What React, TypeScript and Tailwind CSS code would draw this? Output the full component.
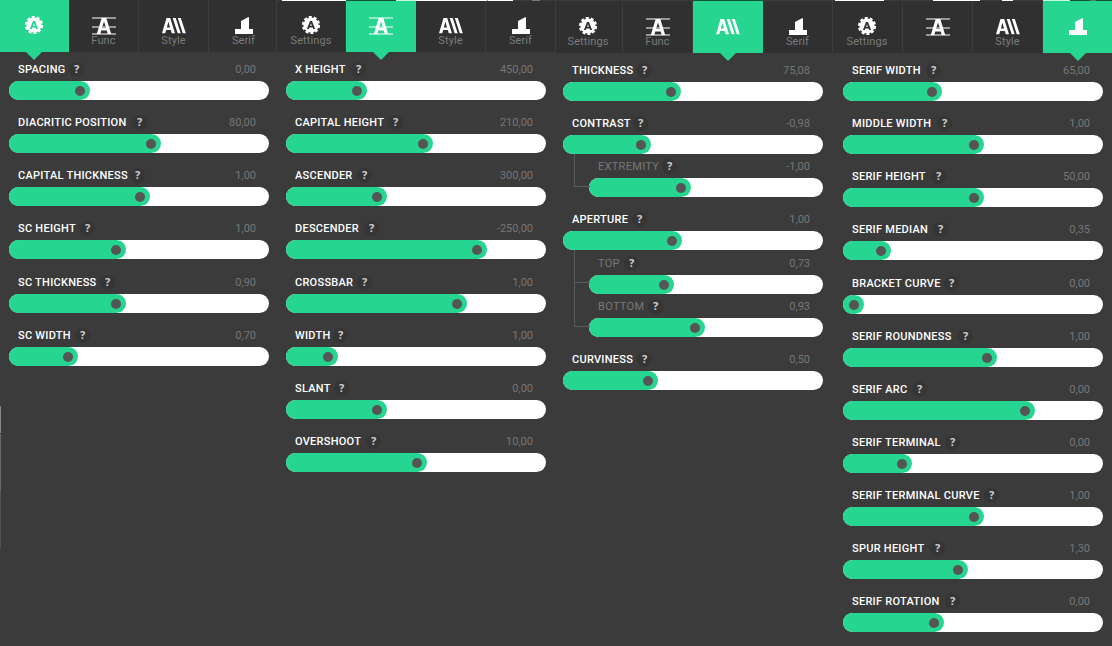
import React from "react";

type TabName = "Settings" | "Func" | "Style" | "Serif";
type Param = { label: string; value: string; q: number; fill: number; top: number; sub?: string };
type PanelData = {
  active: TabName;
  tabs: { name: TabName; w: number; hideLabel?: boolean; nudge?: string }[];
  strip: { w: number; color: string }[];
  width: string;
  nav: string;
  navEnd: number;
  tabPad: string;
  pad: string;
  params: Param[];
};

const icons: Record<TabName, React.ReactNode> = {
  Settings: (
    <svg width="20" height="20" viewBox="0 0.6 20 20" className="block">
      <path
        fillRule="evenodd"
        fill="currentColor"
        d="M10 2a7.600 7.600 0 1 0 0 15.200a7.600 7.600 0 1 0 0-15.200zM9 5.600h2l3.100 8.100h-1.900l-.6-1.700h-3.200l-.6 1.700H5.900zM10 7.800l-.9 2.600h1.800z"
      />
      <circle cx="10" cy="9.600" r="7.900" fill="none" stroke="currentColor" strokeWidth="2.400" strokeDasharray="3.015 1.949" />
    </svg>
  ),
  Func: (
    <svg width="24" height="20" viewBox="0 0 24 20" className="block">
      <path d="M0 2h24M0 11h24M0 18h24" stroke="currentColor" strokeOpacity=".5" strokeWidth="2" />
      <path fillRule="evenodd" fill="currentColor" d="M9.700 2h4.600L19.200 18h-3.500l-1-3.500H9.300L8.300 18H4.800zM12 5.400L10 12h4z" />
    </svg>
  ),
  Style: (
    <svg width="24" height="18" viewBox="0 0 24 18" className="block">
      <path fillRule="evenodd" fill="currentColor" d="M4.500 1h3.700L13 16.200h-3.200l-1-3.200H4.200l-1 3.200H0zM6.400 4.500L4.900 10.400h3.100zM10.700 1h3l5 15.200h-3zM15.800 1h3l5 15.200h-3z" />
    </svg>
  ),
  Serif: (
    <svg width="18" height="18" viewBox="0 0 18 18" className="block">
      <path fill="currentColor" d="M6 4l7-3.700h1V12h4v5H0v-5h6z" />
    </svg>
  ),
};

const panels: PanelData[] = [
  {
    active: "Settings",
    tabs: [{ name: "Settings", w: 69, nudge: "pr-px" }, { name: "Func", w: 70 }, { name: "Style", w: 70 }, { name: "Serif", w: 68, nudge: "pl-[2px]" }],
    strip: [],
    width: "w-[277px]",
    nav: "h-[52px]",
    navEnd: 52,
    tabPad: "pt-[16px]",
    pad: "pl-[9px]",
    params: [
      { label: "SPACING", value: "0,00", q: 77, fill: 81, top: 81 },
      { label: "DIACRITIC POSITION", value: "80,00", q: 140, fill: 152, top: 134 },
      { label: "CAPITAL THICKNESS", value: "1,00", q: 138, fill: 141, top: 187 },
      { label: "SC HEIGHT", value: "1,00", q: 88, fill: 117, top: 240 },
      { label: "SC THICKNESS", value: "0,90", q: 108, fill: 117, top: 294 },
      { label: "SC WIDTH", value: "0,70", q: 83, fill: 69, top: 347 },
    ],
  },
  {
    active: "Func",
    tabs: [{ name: "Settings", w: 69 }, { name: "Func", w: 70 }, { name: "Style", w: 70 }, { name: "Serif", w: 70 }],
    strip: [
      { w: 5, color: "bg-[#3b3b3b]" },
      { w: 64, color: "bg-white" },
      { w: 50, color: "bg-[#0d5338]" },
      { w: 20, color: "bg-[#c5fae7]" },
      { w: 71, color: "bg-white" },
      { w: 1, color: "bg-[#26d590]" },
      { w: 25, color: "bg-white" },
      { w: 19, color: "bg-[#3b3b3b]" },
      { w: 8, color: "bg-[#777]" },
      { w: 16, color: "bg-[#3b3b3b]" },
    ],
    width: "w-[279px]",
    nav: "h-[52px]",
    navEnd: 52,
    tabPad: "pt-[15px]",
    pad: "pl-[9px]",
    params: [
      { label: "X HEIGHT", value: "450,00", q: 82, fill: 81, top: 81 },
      { label: "CAPITAL HEIGHT", value: "210,00", q: 119, fill: 147, top: 134 },
      { label: "ASCENDER", value: "300,00", q: 88, fill: 101, top: 187 },
      { label: "DESCENDER", value: "-250,00", q: 95, fill: 201, top: 240 },
      { label: "CROSSBAR", value: "1,00", q: 88, fill: 181, top: 294 },
      { label: "WIDTH", value: "1,00", q: 64, fill: 52, top: 347 },
      { label: "SLANT", value: "0,00", q: 65, fill: 101, top: 400 },
      { label: "OVERSHOOT", value: "10,00", q: 97, fill: 141, top: 453 },
    ],
  },
  {
    active: "Style",
    tabs: [{ name: "Settings", w: 67, nudge: "pr-[2px]" }, { name: "Func", w: 70 }, { name: "Style", w: 70 }, { name: "Serif", w: 70 }],
    strip: [
      { w: 137, color: "bg-[#3b3b3b]" },
      { w: 70, color: "bg-[#0d5338]" },
      { w: 70, color: "bg-[#3b3b3b]" },
    ],
    width: "w-[277px]",
    nav: "h-[53px]",
    navEnd: 53,
    tabPad: "pt-[16px]",
    pad: "pl-[7px]",
    params: [
      { label: "THICKNESS", value: "75,08", q: 91, fill: 118, top: 82 },
      { label: "CONTRAST", value: "-0,98", q: 87, fill: 88, top: 135 },
      { label: "EXTREMITY", value: "-1,00", q: 90, fill: 102, top: 178, sub: "bottom-[10px] h-[33px]" },
      { label: "APERTURE", value: "1,00", q: 86, fill: 119, top: 231 },
      { label: "TOP", value: "0,73", q: 52, fill: 85, top: 275, sub: "bottom-[11px] h-[33px]" },
      { label: "BOTTOM", value: "0,93", q: 76, fill: 116, top: 318, sub: "bottom-[10px] h-[45px]" },
      { label: "CURVINESS", value: "0,50", q: 91, fill: 95, top: 371 },
    ],
  },
  {
    active: "Serif",
    tabs: [{ name: "Settings", w: 70, nudge: "pr-px" }, { name: "Func", w: 70, hideLabel: true }, { name: "Style", w: 70 }, { name: "Serif", w: 69 }],
    strip: [
      { w: 2, color: "bg-[#3b3b3b]" },
      { w: 49, color: "bg-white" },
      { w: 49, color: "bg-[#3b3b3b]" },
      { w: 47, color: "bg-white" },
      { w: 22, color: "bg-[#3b3b3b]" },
      { w: 11, color: "bg-white" },
      { w: 30, color: "bg-[#3b3b3b]" },
      { w: 27, color: "bg-[#c5fae7]" },
      { w: 20, color: "bg-[#0d5338]" },
      { w: 6, color: "bg-[#4c7868]" },
      { w: 16, color: "bg-[#0d5338]" },
    ],
    width: "w-[279px]",
    nav: "h-[53px]",
    navEnd: 53,
    tabPad: "pt-[16px]",
    pad: "pl-[10px]",
    params: [
      { label: "SERIF WIDTH", value: "65,00", q: 100, fill: 99, top: 82 },
      { label: "MIDDLE WIDTH", value: "1,00", q: 111, fill: 141, top: 135 },
      { label: "SERIF HEIGHT", value: "50,00", q: 105, fill: 141, top: 188 },
      { label: "SERIF MEDIAN", value: "0,35", q: 107, fill: 48, top: 241 },
      { label: "BRACKET CURVE", value: "0,00", q: 118, fill: 21, top: 295 },
      { label: "SERIF ROUNDNESS", value: "1,00", q: 132, fill: 154, top: 348 },
      { label: "SERIF ARC", value: "0,00", q: 86, fill: 192, top: 401 },
      { label: "SERIF TERMINAL", value: "0,00", q: 119, fill: 69, top: 454 },
      { label: "SERIF TERMINAL CURVE", value: "1,00", q: 158, fill: 141, top: 507 },
      { label: "SPUR HEIGHT", value: "1,30", q: 104, fill: 125, top: 560 },
      { label: "SERIF ROTATION", value: "0,00", q: 119, fill: 101, top: 613 },
    ],
  },
];

function Slider({ p, gap }: { p: Param; gap: number }) {
  return (
    <div className={p.sub ? "relative ml-[26px] w-[234px]" : "w-[260px]"} style={{ marginTop: gap }}>
      {p.sub && <div className={`absolute left-[-15px] w-[16px] border-b border-l border-[#5c5c5c] ${p.sub}`} />}
      <div className="flex h-[22px] items-center pr-[13px] pb-[2px] pl-[9px] text-[11px] whitespace-nowrap">
        <span className={p.sub ? "pt-[2px] tracking-[0.3px] text-[#777]" : "pt-[2px] font-medium tracking-[0.26px] text-white"} style={{ width: p.q - 26 }}>
          {p.label}
        </span>
        <span className="flex size-[15px] shrink-0 items-center justify-center rounded-full bg-[#353535] font-['Noto_Sans',sans-serif] text-[11px] font-bold text-[#d0d0d0]">?</span>
        <span className="ml-auto pt-[2px] text-[#777]">{p.value}</span>
      </div>
      <div className="h-[19px] rounded-full bg-white">
        <div className="flex h-full items-center justify-end rounded-full bg-[#26d590] pr-[5px]" style={{ width: p.fill }}>
          <div className="size-[10px] rounded-full bg-[#555]" />
        </div>
      </div>
    </div>
  );
}

function Panel({ d }: { d: PanelData }) {
  let end = d.navEnd;
  return (
    <section className={`${d.width} shrink-0`}>
      <nav className={`flex flex-col bg-[#303030] ${d.nav}`}>
        {d.strip.length > 0 && (
          <div className="flex h-px shrink-0">
            {d.strip.map((s, i) => (
              <div key={i} className={s.color} style={{ width: s.w }} />
            ))}
          </div>
        )}
        <div className="flex flex-1">
          {d.tabs.map((t) => {
            const on = t.name === d.active;
            return (
              <div
                key={t.name}
                className={`relative flex shrink-0 flex-col items-center text-white ${d.tabPad} ${t.nudge ?? ""} ${on ? "bg-[#26d590]" : "border-r border-[#3d3d3d]"}`}
                style={{ width: t.w }}
              >
                <div className="flex h-[20px] items-center">{icons[t.name]}</div>
                {!on && !t.hideLabel && <span className="-mt-[3px] text-[11px] leading-[15px] tracking-[0.1px] text-[#7b7b7b]">{t.name}</span>}
                {on && (
                  <svg width="16" height="8" viewBox="0 0 16 8" className="absolute top-full text-[#26d590]">
                    <path d="M0 0h16L8 8z" fill="currentColor" />
                  </svg>
                )}
              </div>
            );
          })}
        </div>
      </nav>
      <div className={d.pad}>
        {d.params.map((p) => {
          const gap = p.top - 22 - end;
          end = p.top + 19;
          return <Slider key={p.label} p={p} gap={gap} />;
        })}
      </div>
    </section>
  );
}

export default function App() {
  return (
    <main className="relative flex h-[646px] w-[1112px] overflow-hidden bg-[#3b3b3b] font-[Roboto,sans-serif]">
      {panels.map((d) => (
        <Panel key={d.active} d={d} />
      ))}
      <div className="absolute top-[406px] left-0 flex w-px flex-col">
        <div className="h-[27px] bg-[#888]" />
        <div className="mt-px h-[57px] bg-[#696969]" />
        <div className="h-[57px] bg-[#515151]" />
      </div>
    </main>
  );
}
